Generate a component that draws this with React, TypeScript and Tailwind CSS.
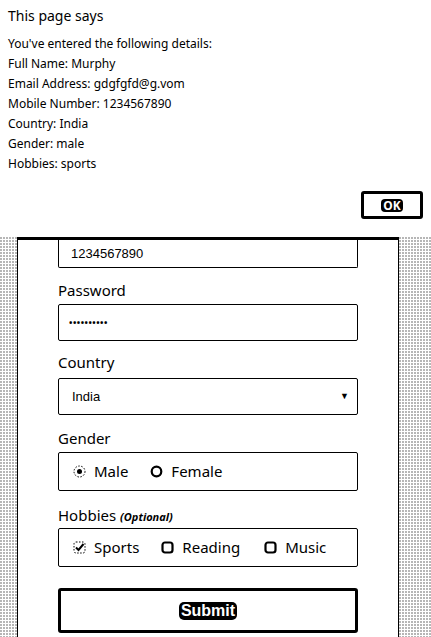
import React from 'react';

const dots =
  'bg-[radial-gradient(circle_at_1px_1px,#000_0.6px,transparent_0.75px)] bg-[length:3px_3px]';

function Radio({ checked }: { checked?: boolean }) {
  return (
    <svg width="13" height="13" viewBox="0 0 13 13" className="shrink-0">
      {checked ? (
        <>
          <circle cx="6.5" cy="6.5" r="5.5" fill="none" stroke="#000" strokeWidth="1" strokeDasharray="1.5 1.5" />
          <circle cx="6.5" cy="6.5" r="2.5" fill="#000" />
        </>
      ) : (
        <circle cx="6.5" cy="6.5" r="4.8" fill="none" stroke="#000" strokeWidth="2.2" />
      )}
    </svg>
  );
}

function Check({ checked }: { checked?: boolean }) {
  return (
    <svg width="13" height="13" viewBox="0 0 13 13" className="shrink-0">
      {checked ? (
        <>
          <rect x="1" y="1" width="11" height="11" rx="2" fill="none" stroke="#000" strokeWidth="1" strokeDasharray="1.5 1.5" />
          <path d="M3 6.5 L5.5 9 L10.5 3" fill="none" stroke="#000" strokeWidth="2" />
        </>
      ) : (
        <rect x="1.5" y="1.5" width="10" height="10" rx="2.5" fill="none" stroke="#000" strokeWidth="2.2" />
      )}
    </svg>
  );
}

export default function App() {
  return (
    <div className="w-[431px] h-[637px] overflow-hidden bg-white text-black font-['Noto_Sans',sans-serif]">
      {/* alert dialog */}
      <div className="h-[237px] px-[8px] pt-[5px] flex flex-col">
        <div className="text-[14px] leading-[22px]">This page says</div>
        <div className="mt-[7px] text-[12px] leading-[20px]">
          <div>You've entered the following details:</div>
          <div>Full Name: Murphy</div>
          <div>Email Address: gdgfgfd@g.vom</div>
          <div>Mobile Number: 1234567890</div>
          <div>Country: India</div>
          <div>Gender: male</div>
          <div>Hobbies: sports</div>
        </div>
        <div className="mt-[17px] flex justify-end">
          <button className="w-[62px] h-[28px] border-[3px] border-black rounded-[3px] grid place-items-center">
            <span className="bg-black text-white text-[12px] font-bold leading-[13px] px-[2px] rounded-[4px]">OK</span>
          </button>
        </div>
      </div>

      {/* page behind */}
      <div className="flex h-[400px]">
        <div className={`w-[17px] ${dots}`} />
        <div className="w-[382px] border-x border-t-[3px] border-black bg-white px-[40px] flex flex-col">
          <div className="h-[28px] border-x border-b border-black rounded-b-[2px] pl-[12px] flex items-center font-['Liberation_Sans',sans-serif] text-[13px]">
            1234567890
          </div>

          <div className="mt-[10px] h-[24px] leading-[24px] text-[15px]">Password</div>
          <div className="mt-[2px] h-[37px] border border-black rounded-[2px] pl-[10px] flex items-center text-[9px] tracking-[0.5px] font-bold">
            ••••••••••
          </div>

          <div className="mt-[9px] h-[24px] leading-[24px] text-[15px]">Country</div>
          <div className="mt-[4px] h-[37px] border border-black rounded-[2px] pl-[13px] pr-[8px] flex items-center justify-between font-['Liberation_Sans',sans-serif] text-[13px]">
            <span>India</span>
            <span className="text-[9px]">▼</span>
          </div>

          <div className="mt-[11px] h-[24px] leading-[24px] text-[15px]">Gender</div>
          <div className="mt-[2px] h-[39px] border border-black rounded-[2px] pl-[14px] flex items-center text-[15px]">
            <label className="flex items-center gap-[8px]">
              <Radio checked />
              <span>Male</span>
            </label>
            <label className="ml-[22px] flex items-center gap-[8px]">
              <Radio />
              <span>Female</span>
            </label>
          </div>

          <div className="mt-[12px] h-[24px] leading-[24px] text-[15px]">
            Hobbies <span className="text-[11px] italic font-bold">(Optional)</span>
          </div>
          <div className="mt-[1px] h-[39px] border border-black rounded-[2px] pl-[14px] flex items-center text-[15px]">
            <label className="flex items-center gap-[8px]">
              <Check checked />
              <span>Sports</span>
            </label>
            <label className="ml-[22px] flex items-center gap-[8px]">
              <Check />
              <span>Reading</span>
            </label>
            <label className="ml-[24px] flex items-center gap-[8px]">
              <Check />
              <span>Music</span>
            </label>
          </div>

          <button className="mt-[21px] h-[45px] border-[3px] border-black rounded-[3px] grid place-items-center">
            <span className="bg-black text-white text-[16px] font-bold leading-[18px] px-[2px] rounded-[5px] font-['Liberation_Sans',sans-serif]">
              Submit
            </span>
          </button>
        </div>
        <div className={`flex-1 ${dots}`} />
      </div>
    </div>
  );
}
